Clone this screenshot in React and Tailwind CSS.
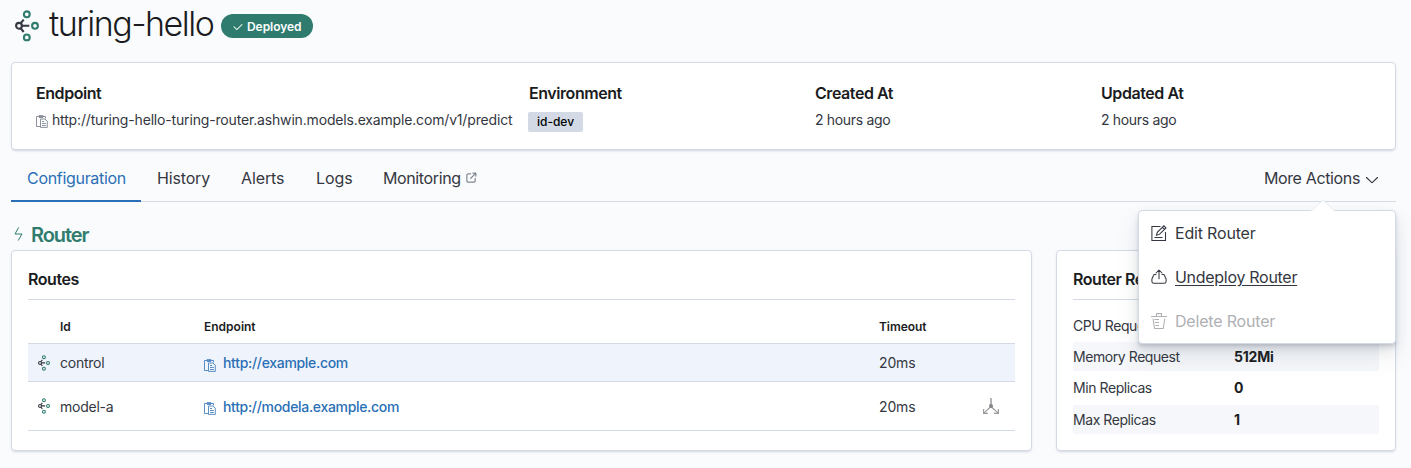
import React from "react";

function RouterIcon({ size, thin, className = "" }) {
  return (
    <svg width={size[0]} height={size[1]} viewBox="0 0 24 32" fill="none" strokeWidth={thin ? 2.2 : 2.1} className={className}>
      <g stroke="#343741">
        <circle cx="4" cy="15.8" r="2.9" />
        <path d="M7 15.8H14.3M5.8 13.2L8.7 9.6M5.8 18.4L8.7 22" />
      </g>
      <g stroke="#2f7c6f">
        <circle cx="11.8" cy="4.3" r="2.9" />
        <circle cx="20" cy="15.8" r="2.9" />
        <circle cx="11.8" cy="27.4" r="2.9" />
      </g>
    </svg>
  );
}

function CopyIcon({ className = "" }) {
  return (
    <svg width="12" height="13" viewBox="0 0 12 13" fill="none" stroke="currentColor" strokeWidth="0.85" className={`opacity-90 ${className}`}>
      <path d="M4 11.5H.5V1.5H9.5V3.5M3 1.5V.6H7V1.5M3 2.5H7" />
      <path d="M4.5 4H8.8L11.3 6.2V12.4H4.5ZM6 6.5H8M6 8.5H9.8M6 10.5H9.8" />
    </svg>
  );
}

function CheckIcon() {
  return (
    <svg width="12" height="12" viewBox="0 0 16 16" fill="currentColor">
      <path d="M6.5 12a.502.502 0 01-.354-.146l-4-4a.502.502 0 01.708-.708L6.5 10.793l6.646-6.647a.502.502 0 01.708.708l-7 7A.502.502 0 016.5 12" />
    </svg>
  );
}

function PopoutIcon() {
  return (
    <svg width="12" height="12" viewBox="0 0 16 16" fill="currentColor" stroke="currentColor" strokeWidth="0.3" className="text-[#69707d]">
      <path d="M13 8.5a.5.5 0 111 0V12a2 2 0 01-2 2H4a2 2 0 01-2-2V4a2 2 0 012-2h3.5a.5.5 0 010 1H4a1 1 0 00-1 1v8a1 1 0 001 1h8a1 1 0 001-1V8.5zm-5.12.339a.5.5 0 11-.706-.707L13.305 2H10.5a.5.5 0 110-1H14a1 1 0 011 1v3.5a.5.5 0 11-1 0V2.72L7.88 8.838z" />
    </svg>
  );
}

function ArrowDownIcon() {
  return (
    <svg width="16" height="16" viewBox="0 0 16 16" fill="none" stroke="currentColor" strokeWidth="1.1" strokeLinecap="round" className="mt-[3px]">
      <path d="M2.5 5.5L7.3 10.2Q8 10.9 8.7 10.2L13.5 5.5" />
    </svg>
  );
}

function BoltIcon() {
  return (
    <svg width="9" height="14" viewBox="0 0 9 14" fill="none" stroke="currentColor" strokeWidth="1" strokeLinejoin="round" strokeLinecap="round">
      <path d="M4.4 .8L1 7H8L4.4 13.2" />
    </svg>
  );
}

function EditIcon() {
  return (
    <svg width="16" height="16" viewBox="0 0 16 16" fill="none" stroke="currentColor" strokeWidth="1.05">
      <path d="M9.5 1.5H.9V15.5H14.5V7M3.5 12.5H11.5" />
      <path d="M5.5 10.2L6.3 7.3L12.9.8L15 2.9L8.4 9.4ZM11.4 2.3L13.5 4.4" />
    </svg>
  );
}

function ExportIcon() {
  return (
    <svg width="16" height="16" viewBox="0 0 16 16" fill="none" stroke="currentColor" strokeWidth="1.05" strokeLinecap="round" strokeLinejoin="round">
      <path d="M5 5.5H3.6Q2.9 5.5 2.6 6.3L.9 10V12.4Q.9 14.3 2.8 14.3H13.2Q15.1 14.3 15.1 12.4V10L13.4 6.3Q13.1 5.5 12.4 5.5H11M8 9.8V1.2M5 4L8 1L11 4" />
    </svg>
  );
}

function TrashIcon() {
  return (
    <svg width="16" height="16" viewBox="0 0 16 16" fill="none" stroke="currentColor" strokeWidth="1.05">
      <path d="M0 3.5H16M5.5 3.5V.6H10.5V3.5M2 5.5L3.6 15.5H12.2L13.8 5.5M3.5 6.5H8M4 9.5H8M4.5 12.5H8" />
    </svg>
  );
}

function SplitIcon() {
  return (
    <svg width="16" height="16" viewBox="0 0 16 16" fill="none" stroke="#98989b" strokeWidth="1.1">
      <path d="M8 0V7" strokeWidth="2" stroke="#b4b4b6" />
      <path d="M8 8.5L.8 15.2M8 8.5L15.2 15.2M.6 11V15.4H5M15.4 11V15.4H11" />
      <circle cx="8" cy="8" r="2" fill="#858589" stroke="none" />
    </svg>
  );
}

const PANEL = "rounded-[4px] border border-[#d3dae6] bg-white shadow-[0_2px_2px_-1px_rgba(152,162,179,0.3),0_1px_5px_-2px_rgba(152,162,179,0.3)]";

function Detail({ title, className, children }) {
  return (
    <div className={className}>
      <div className="h-6 text-[16px] leading-6 font-semibold tracking-[-0.44px] text-[#1a1c21]">{title}</div>
      {children}
    </div>
  );
}

function RouteRow({ id, url, active, split }) {
  return (
    <div className={active ? "flex h-[38px] items-center border-b border-[#d3dae6] bg-[#eff4fc]" : "flex h-[49px] items-center border-b border-[#d3dae6]"}>
      <div className="w-8 pl-[10px]">
        <RouterIcon size={[12, 16]} thin />
      </div>
      <div className={active ? "w-36 tracking-[-0.25px]" : "w-36 pt-px tracking-[-0.25px]"}>{id}</div>
      <div className="flex w-[675px] items-center gap-[7px] text-[#2a6fb5]">
        <CopyIcon className="mt-[5px]" />
        <span className={active ? "font-medium tracking-[-0.31px]" : "pt-px font-medium tracking-[-0.32px]"}>{url}</span>
      </div>
      <div className={active ? "w-[104px] tracking-[-0.15px]" : "w-[104px] pt-px tracking-[-0.15px]"}>20ms</div>
      {split && <SplitIcon />}
    </div>
  );
}

function ResourceRow({ label, value, striped, first }) {
  return (
    <div className={striped ? "flex h-[29px] items-center bg-[#f5f7fa]" : first ? "flex h-[34px] items-center pt-[2px]" : "flex h-[34px] items-center"}>
      <div className="w-[161px] tracking-[-0.43px]">{label}</div>
      <div className="font-bold tracking-[-0.2px] text-[#1a1c21]">{value}</div>
    </div>
  );
}

export default function App() {
  return (
    <div className="relative h-[468px] w-[1411px] overflow-hidden bg-[#fafbfd] pl-[11px] font-['Inter',sans-serif] text-[14px] leading-5 text-[#343741]">
      <header className="flex h-[62px] items-start pl-1">
        <RouterIcon size={[24, 32]} className="mt-[10px]" />
        <h1 className="ml-[10px] w-[172px] pt-1 text-[34px] leading-10 font-light tracking-[-1.5px] whitespace-nowrap text-[#1a1c21]">turing-hello</h1>
        <span className="mt-[14px] flex h-6 w-[92px] items-center gap-[3px] rounded-full bg-[#2f7c6f] pt-px pl-[11px] text-[12px] font-semibold tracking-[-0.05px] text-white">
          <CheckIcon />
          Deployed
        </span>
      </header>

      <section className={`${PANEL} flex h-[88px] w-[1385px] pt-[18px] pl-6`}>
        <Detail title="Endpoint" className="w-[493px]">
          <div className="mt-[5px] flex items-center gap-1">
            <CopyIcon className="mt-[3px] text-[#69707d]" />
            <span className="whitespace-nowrap tracking-[-0.165px]">http://turing-hello-turing-router.ashwin.models.example.com/v1/predict</span>
          </div>
        </Detail>
        <Detail title="Environment" className="w-[286px]">
          <div className="mt-[7px] ml-[-1px] flex h-5 w-[55px] items-center justify-center rounded-[2px] bg-[#d3dae6] text-[12px] font-medium text-black">id-dev</div>
        </Detail>
        <Detail title="Created At" className="w-[286px]">
          <div className="mt-[5px] tracking-[-0.33px]">2 hours ago</div>
        </Detail>
        <Detail title="Updated At">
          <div className="mt-[5px] tracking-[-0.33px]">2 hours ago</div>
        </Detail>
      </section>

      <nav className="mt-[6px] flex h-[46px] w-[1385px] border-b border-[#d3dae6] text-[16px] leading-6 tracking-[-0.16px]">
        <div className="-mb-px h-[46px] w-[130px] border-b-2 border-[#2a6fb5] pt-[10px] pl-4 tracking-[-0.31px] text-[#2a6fb5]">Configuration</div>
        <div className="w-[84px] pt-[10px] pl-4">History</div>
        <div className="w-[75px] pt-[10px] pl-4 tracking-[-0.1px]">Alerts</div>
        <div className="w-[67px] pt-[10px] pl-4 tracking-[-0.1px]">Logs</div>
        <div className="flex h-[34px] w-[110px] items-center gap-1 pt-[10px] pl-4 tracking-[-0.38px]">
          Monitoring
          <PopoutIcon />
        </div>
        <div className="ml-auto flex h-[34px] items-center gap-1 pt-[10px] pr-4 tracking-[-0.36px]">
          More Actions
          <ArrowDownIcon />
        </div>
      </nav>

      <h2 className="flex h-12 items-start pt-[21px] pl-[3px] text-[#2f7c6f]">
        <span className="pt-1"><BoltIcon /></span>
        <span className="ml-2 text-[20px] leading-6 font-semibold tracking-[-1.1px]">Router</span>
      </h2>

      <main className="flex gap-6">
        <section className={`${PANEL} h-[201px] w-[1021px] px-4 pt-4`}>
          <h3 className="h-[33px] border-b border-[#d3dae6] text-[16px] leading-6 font-semibold tracking-[-0.44px] text-[#1a1c21]">Routes</h3>
          <div className="flex h-11 items-center border-b border-[#d3dae6] pt-[10px] pl-8 text-[12px] font-semibold text-[#1a1c21]">
            <div className="w-36">Id</div>
            <div className="w-[675px]">Endpoint</div>
            <div className="tracking-[-0.06px]">Timeout</div>
          </div>
          <RouteRow id="control" url="http://example.com" active />
          <RouteRow id="model-a" url="http://modela.example.com" split />
        </section>

        <section className={`${PANEL} h-[201px] w-[340px] px-4 pt-4`}>
          <h3 className="mb-2 h-[33px] border-b border-[#d3dae6] text-[16px] leading-6 font-semibold tracking-[-0.44px] text-[#1a1c21]">Router Resources</h3>
          <ResourceRow label="CPU Request" first />
          <ResourceRow label="Memory Request" value="512Mi" striped />
          <ResourceRow label="Min Replicas" value="0" />
          <ResourceRow label="Max Replicas" value="1" striped />
        </section>
      </main>

      <div className="absolute top-[210px] left-[1138px] h-[134px] w-[258px] rounded-[4px] border border-[#d3dae6] bg-white text-[16px] leading-6 tracking-[-0.18px] shadow-[0_12px_24px_rgba(65,78,101,0.1),0_6px_12px_rgba(65,78,101,0.1),0_4px_4px_rgba(65,78,101,0.1),0_2px_2px_rgba(65,78,101,0.1)]">
        <svg width="24" height="12" viewBox="0 0 24 12" className="absolute -top-[12px] left-[172px]">
          <path d="M0 12L12 1L24 12Z" fill="#fff" />
          <path d="M1 11.5L12 1L23 11.5" fill="none" stroke="#e6eaf1" />
        </svg>
        <div className="flex h-11 items-center gap-2 pl-3"><EditIcon />Edit Router</div>
        <div className="flex h-11 items-center gap-2 pl-3"><ExportIcon /><span className="tracking-[-0.29px] underline underline-offset-2">Undeploy Router</span></div>
        <div className="flex h-11 items-center gap-2 pl-3 text-[#afb0b3]"><TrashIcon />Delete Router</div>
      </div>
    </div>
  );
}
